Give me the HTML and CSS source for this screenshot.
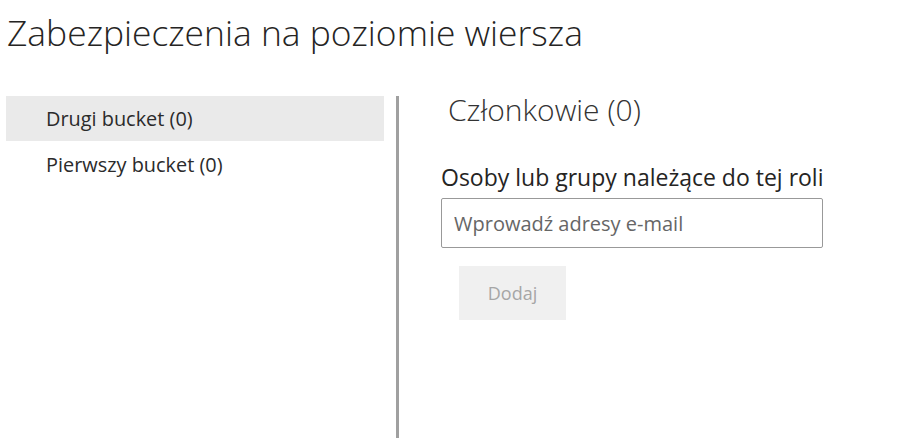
FILE: index.html
```html
<!DOCTYPE html>
<html lang="pl">
<head>
<meta charset="utf-8">
<title>Zabezpieczenia na poziomie wiersza</title>
<link rel="stylesheet" href="styles.css">
</head>
<body>
<h1 class="page-title">Zabezpieczenia na poziomie wiersza</h1>
<div class="layout">
  <ul class="roles">
    <li class="role selected">Drugi bucket (0)</li>
    <li class="role">Pierwszy bucket (0)</li>
  </ul>
  <div class="divider"></div>
  <section class="members">
    <h2 class="members-title">Członkowie (0)</h2>
    <label class="field-label" for="emails">Osoby lub grupy należące do tej roli</label>
    <input id="emails" class="email-input" type="text" placeholder="Wprowadź adresy e-mail">
    <button class="add-btn" disabled>Dodaj</button>
  </section>
</div>
</body>
</html>
```
FILE: styles.css
```css
html, body {
  margin: 0;
  padding: 0;
  background: #fff;
  height: 100%;
  overflow: hidden;
}
body {
  font-family: "Open Sans", "Noto Sans", sans-serif;
  color: #252423;
}
.page-title {
  margin: 0;
  padding: 10px 0 0 7px;
  height: 86px;
  box-sizing: border-box;
  font-size: 35.4px;
  font-weight: 300;
  line-height: 44px;
  color: #252423;
}
.layout {
  display: flex;
  align-items: stretch;
  height: 342px;
  padding-top: 10px;
}
.roles {
  list-style: none;
  margin: 0 0 0 6px;
  padding: 0;
  width: 378px;
}
.role {
  height: 45px;
  line-height: 45px;
  padding-left: 40px;
  font-size: 19.9px;
  color: #2b2b2b;
}
.role + .role {
  line-height: 47px;
}
.role.selected {
  background: #eaeaea;
}
.divider {
  width: 3px;
  margin-left: 12px;
  background: #a0a0a0;
}
.members {
  display: flex;
  flex-direction: column;
  align-items: flex-start;
  padding-left: 42px;
}
.members-title {
  margin: 0;
  padding-left: 7px;
  font-size: 30px;
  font-weight: 300;
  line-height: 28px;
  color: #333;
}
.field-label {
  margin-top: 41px;
  font-size: 23px;
  line-height: 24px;
  color: #252423;
}
.email-input {
  margin-top: 9px;
  width: 382px;
  height: 50px;
  box-sizing: border-box;
  border: 1px solid #999;
  border-radius: 2px;
  padding: 0 12px;
  font-family: "Open Sans", "Noto Sans", sans-serif;
  font-size: 20px;
  color: #252423;
  outline: none;
}
.email-input::placeholder {
  color: #666;
  font-size: 20px;
}
.add-btn {
  margin: 18px 0 0 18px;
  width: 107px;
  height: 54px;
  border: none;
  background: #f0f0f0;
  color: #a6a6a6;
  font-family: inherit;
  font-size: 18px;
  padding: 0;
}
```
